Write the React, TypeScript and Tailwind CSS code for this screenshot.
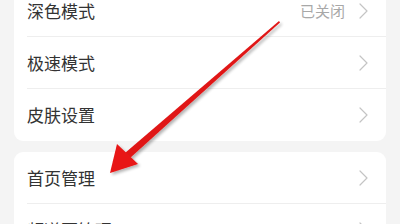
import React from "react";

const Chevron = () => (
  <svg className="w-[9px] h-[16px] text-[#c4c4c4]" viewBox="0 0 9 16" fill="none">
    <path d="M1 1l7 7-7 7" stroke="currentColor" strokeWidth={1.2} strokeLinecap="round" strokeLinejoin="round" />
  </svg>
);

interface RowProps {
  label: string;
  value?: string;
  divider?: boolean;
}

const Row: React.FC<RowProps> = ({ label, value, divider }) => (
  <div className="relative flex items-center h-[52px] pl-[13px] pr-[18px]">
    <span className="flex-1 text-[17px] text-[#333]">{label}</span>
    {value && <span className="text-[15px] text-[#a8a8a8] mr-[14px]">{value}</span>}
    <Chevron />
    {divider && <div className="absolute left-[13px] right-0 bottom-0 h-px bg-[#eeeeee]" />}
  </div>
);

export default function App() {
  return (
    <div
      className="relative w-[400px] h-[224px] overflow-hidden bg-[#f4f4f4]"
      style={{ fontFamily: '"Noto Sans CJK SC", "Noto Sans", sans-serif' }}
    >
      <div className="pl-[14px] pr-[14px] -mt-[15px] flex flex-col gap-[11px]">
        <div className="bg-white rounded-[9px]">
          <Row label="深色模式" value="已关闭" divider />
          <Row label="极速模式" divider />
          <Row label="皮肤设置" />
        </div>
        <div className="bg-white rounded-[9px]">
          <Row label="首页管理" divider />
          <Row label="频道页管理" />
        </div>
      </div>

      <svg className="absolute inset-0 w-[400px] h-[224px] pointer-events-none" viewBox="0 0 400 224">
        <defs>
          <filter id="sh" x="-20%" y="-20%" width="140%" height="140%">
            <feGaussianBlur in="SourceAlpha" stdDeviation="1.5" />
            <feOffset dx="2" dy="2" />
            <feComponentTransfer>
              <feFuncA type="linear" slope="0.3" />
            </feComponentTransfer>
            <feMerge>
              <feMergeNode />
              <feMergeNode in="SourceGraphic" />
            </feMerge>
          </filter>
        </defs>
        <g filter="url(#sh)">
          <polygon points="279,21 280,22.5 130,158 125,153" fill="#e01515" />
          <polygon points="110,173 117,144 138,164" fill="#e81414" />
        </g>
      </svg>
    </div>
  );
}
